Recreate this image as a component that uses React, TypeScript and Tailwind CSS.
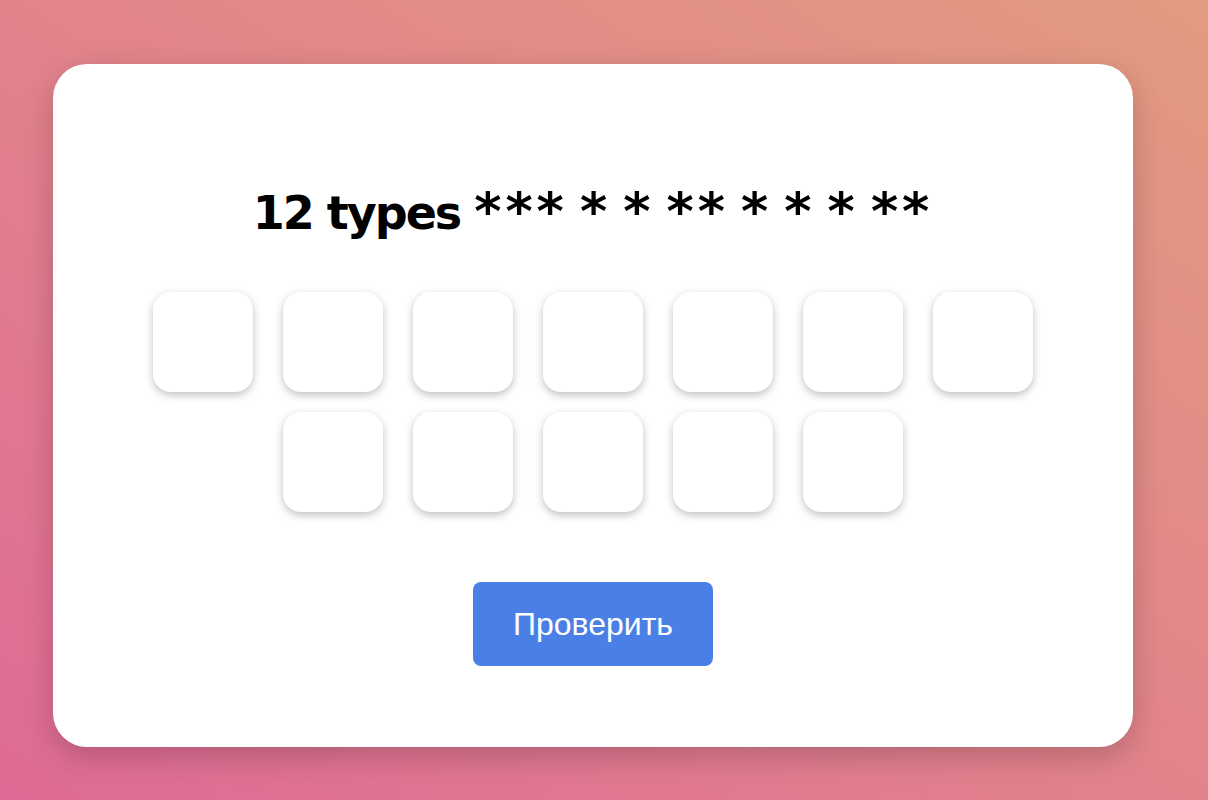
export default function App() {
  const row1 = [0, 1, 2, 3, 4, 5, 6];
  const row2 = [0, 1, 2, 3, 4];
  return (
    <div className="min-h-[800px] w-full bg-gradient-to-tr from-[#df6a95] to-[#e39b80] flex pl-[53px] pt-[64px]">
      <div className="w-[1080px] h-[683px] bg-white rounded-[34px] shadow-[0_10px_30px_rgba(0,0,0,0.2)] flex flex-col items-center pt-[121px]">
        <h1 className="font-['DejaVu_Sans','Verdana',sans-serif] font-bold text-[46px] leading-[54px] text-black whitespace-pre">
          <span className="tracking-[-2px]">12 types </span>
          <span className="text-[52px] leading-none tracking-[4px] [word-spacing:-10px]">*** * * ** * * * **</span>
        </h1>
        <div className="mt-[52px] flex flex-col items-center gap-[20px]">
          <div className="flex gap-[30px]">
            {row1.map((i) => (
              <div key={i} className="w-[100px] h-[100px] bg-white rounded-[18px] shadow-[0_3px_8px_rgba(0,0,0,0.25)]" />
            ))}
          </div>
          <div className="flex gap-[30px]">
            {row2.map((i) => (
              <div key={i} className="w-[100px] h-[100px] bg-white rounded-[18px] shadow-[0_3px_8px_rgba(0,0,0,0.25)]" />
            ))}
          </div>
        </div>
        <button className="mt-[70px] w-[240px] h-[84px] bg-[#4a80e6] rounded-[8px] text-white text-[32px] font-['Liberation_Sans','Arial',sans-serif]">
          Проверить
        </button>
      </div>
    </div>
  );
}
